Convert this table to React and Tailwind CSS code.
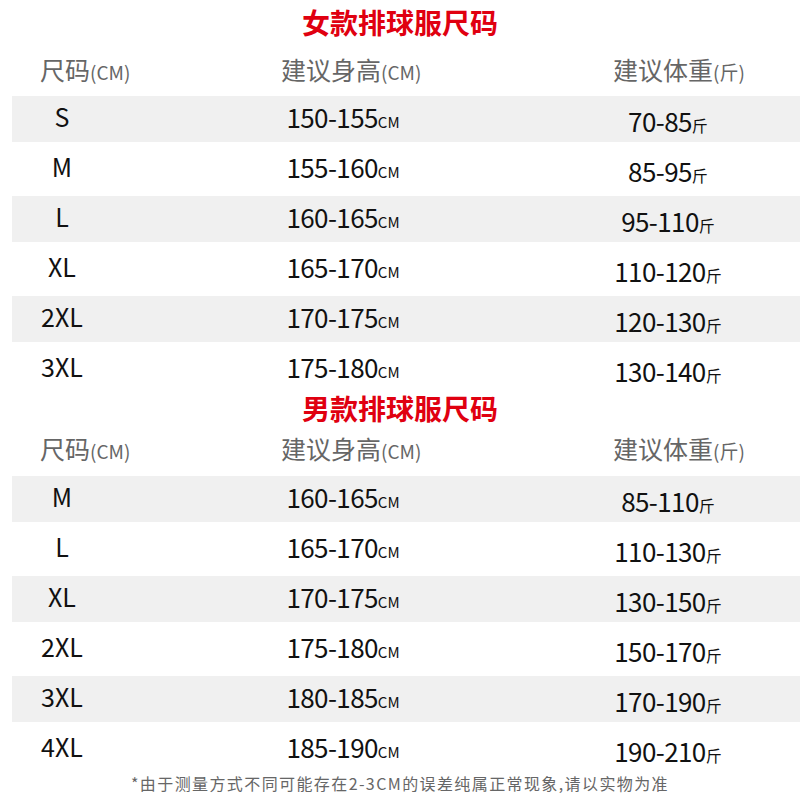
const FONT = { fontFamily: '"Noto Sans CJK SC", "Noto Sans", sans-serif' };

const women = [
  ["S", "150-155", "70-85"],
  ["M", "155-160", "85-95"],
  ["L", "160-165", "95-110"],
  ["XL", "165-170", "110-120"],
  ["2XL", "170-175", "120-130"],
  ["3XL", "175-180", "130-140"],
];

const men = [
  ["M", "160-165", "85-110"],
  ["L", "165-170", "110-130"],
  ["XL", "170-175", "130-150"],
  ["2XL", "175-180", "150-170"],
  ["3XL", "180-185", "170-190"],
  ["4XL", "185-190", "190-210"],
];

function Header({ className }) {
  return (
    <div className={`flex items-center pl-[40px] text-[#666] ${className}`}>
      <div className="w-[241px] text-[25px] leading-none">
        尺码<span className="text-[19px]">(CM)</span>
      </div>
      <div className="w-[332px] text-[25px] leading-none">
        建议身高<span className="text-[19px]">(CM)</span>
      </div>
      <div className="text-[25px] leading-none">
        建议体重<span className="text-[19px]">(斤)</span>
      </div>
    </div>
  );
}

function Row({ size, h, w, gray }) {
  return (
    <div className="h-[50px] ml-[12px] py-[2px]">
      <div className={`h-full flex items-center text-[#111] ${gray ? "bg-[#f0f0f0]" : ""}`}>
        <div className="w-[100px] text-center text-[25px] leading-none pb-[5px]">{size}</div>
        <div className="w-[462px] text-center leading-none pb-[5px]">
          <span className="text-[26px] tracking-[-0.6px]">{h}</span>
          <span className="text-[15px]">CM</span>
        </div>
        <div className="w-[188px] text-center leading-none pt-[3px]">
          <span className="text-[26px] tracking-[-0.6px]">{w}</span>
          <span className="text-[16px]">斤</span>
        </div>
      </div>
    </div>
  );
}

export default function App() {
  return (
    <div className="w-[800px] h-[800px] bg-white overflow-hidden" style={FONT}>
      <div className="h-[44px] flex items-center justify-center text-[#e00010] text-[28px] font-bold leading-none">
        女款排球服尺码
      </div>
      <Header className="h-[50px]" />
      {women.map((r, i) => (
        <Row key={i} size={r[0]} h={r[1]} w={r[2]} gray={i % 2 === 0} />
      ))}
      <div className="h-[28px] flex items-center justify-center text-[#e00010] text-[28px] font-bold leading-none">
        男款排球服尺码
      </div>
      <Header className="h-[52px]" />
      {men.map((r, i) => (
        <Row key={i} size={r[0]} h={r[1]} w={r[2]} gray={i % 2 === 0} />
      ))}
      <div className="h-[18px] flex items-center justify-center text-[#666] text-[16px] tracking-[1.4px] leading-none">
        *由于测量方式不同可能存在2-3CM的误差纯属正常现象,请以实物为准
      </div>
    </div>
  );
}
